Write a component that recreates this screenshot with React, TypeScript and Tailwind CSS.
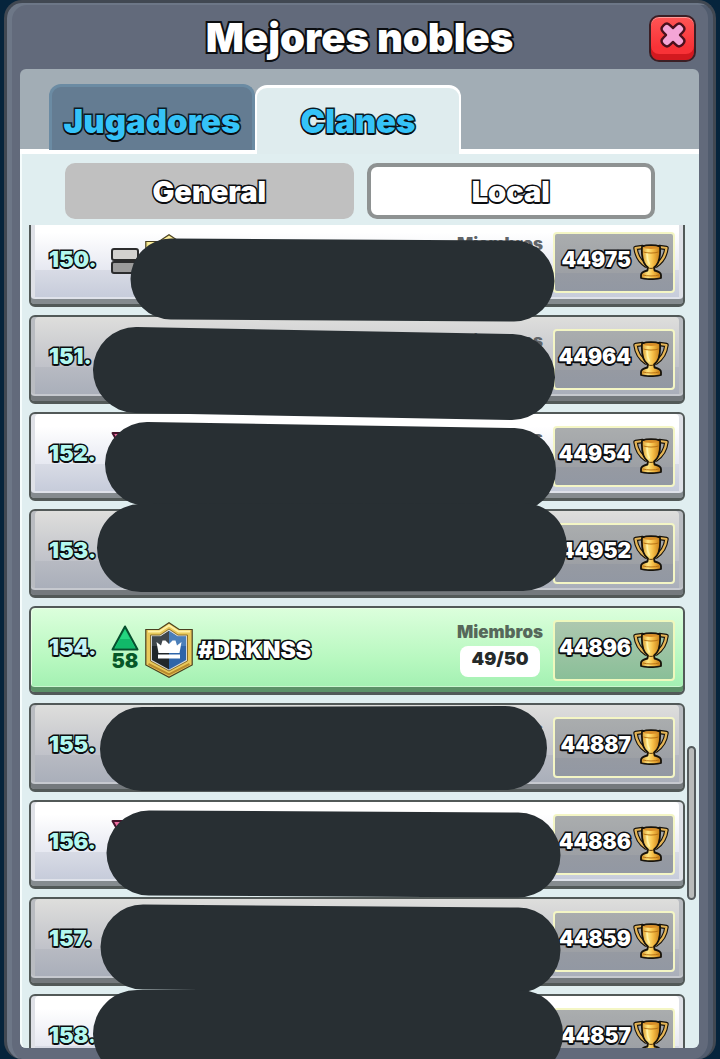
import { useState } from "react";
import clsx from "clsx";

type Trend = "up" | "down" | "same";
type Tone = "light" | "dark" | "own";

type Clan = {
  rank: number;
  trophies: number;
  tone: Tone;
  trend?: Trend;
  change?: number;
  name?: string;
  members?: string;
  badge?: "gold" | "blue";
};

const CLANS: Clan[] = [
  { rank: 150, trophies: 44975, tone: "light", trend: "same", badge: "gold" },
  { rank: 151, trophies: 44964, tone: "dark" },
  { rank: 152, trophies: 44954, tone: "light", trend: "down" },
  { rank: 153, trophies: 44952, tone: "dark" },
  {
    rank: 154,
    trophies: 44896,
    tone: "own",
    trend: "up",
    change: 58,
    name: "#DRKNSS",
    members: "49/50",
    badge: "blue",
  },
  { rank: 155, trophies: 44887, tone: "dark" },
  { rank: 156, trophies: 44886, tone: "light", trend: "down" },
  { rank: 157, trophies: 44859, tone: "dark" },
  { rank: 158, trophies: 44857, tone: "light" },
];

// Marker strokes hiding the other clans: x1, y1, x2, y2, thickness.
const STROKES = [
  [171, 279, 514, 281, 81],
  [136, 370, 512, 377, 86],
  [147, 464, 514, 470, 84],
  [141, 548, 523, 547, 88],
  [142, 749, 505, 748, 84],
  [149, 853, 518, 855, 85],
  [143, 947, 518, 950, 85],
  [137, 1034, 519, 1034, 88],
];

const outline = "font-black [paint-order:stroke_fill] [text-shadow:0_2px_0_#0b0d10]";
const thinStroke = "[-webkit-text-stroke:3px_#0b0d10]";

const rowTone: Record<Tone, string> = {
  light:
    "bg-[linear-gradient(#ffffff_15%,#e6e8f1_60%,#d8dbe5_60%,#c2c8d8)] shadow-[inset_0_-5px_#858b8f,inset_0_-7px_#dfe2ea,inset_4px_0_#dfe1e7,inset_-4px_0_#dfe1e7]",
  dark: "bg-[linear-gradient(#dededc,#c0c2c9_60%,#b7bac2_60%,#a6acb8)] shadow-[inset_0_-5px_#74797d,inset_0_-7px_#c6c9cf,inset_4px_0_#b9bcc1,inset_-4px_0_#b9bcc1]",
  own: "bg-[linear-gradient(#dcffdc,#b8f8c0_60%,#a0efb0)] shadow-[inset_0_-5px_#5c9168,inset_0_-6px_#c9f7cf,inset_1px_1px_#e9ffe6]",
};

export default function App() {
  const [tab, setTab] = useState("Clanes");
  const [scope, setScope] = useState("Local");

  return (
    <div className="relative h-screen overflow-hidden bg-[#06243c] px-1 font-['Inter','Liberation_Sans',sans-serif]">
      <main className="flex h-full flex-col rounded-[18px] border-x-[3px] border-t-[3px] border-[#414852] bg-[#626a7b] pr-[14px] pb-[11px] pl-[13px] shadow-[inset_5px_2px_#6d7787,inset_-5px_0_#515c6e]">
        <header className="grid h-[66px] shrink-0 grid-cols-[50px_1fr_50px] items-center">
          <h1
            className={clsx(
              outline,
              "col-start-2 pt-1 text-center text-[40px] leading-[44px] text-white [-webkit-text-stroke:4px_#0b0d10]",
            )}
          >
            Mejores nobles
          </h1>
          <button
            aria-label="Cerrar"
            className="mt-1 flex h-[47px] w-[47px] items-center justify-center rounded-[10px] border-2 border-[#3b1f25] bg-[linear-gradient(#ff5555,#f83237_70%)] pb-[6px] shadow-[inset_0_-6px_#d3191f,inset_0_1px_#ff9c99]"
          >
            <CloseIcon />
          </button>
        </header>

        <section className="flex min-h-0 flex-1 flex-col rounded-[6px] bg-[#a2adb5]">
          <div
            role="tablist"
            className="flex h-[85px] shrink-0 items-end bg-[linear-gradient(transparent_80px,#ffffff_80px)] pl-[29px]"
          >
            {["Jugadores", "Clanes"].map((t) => (
              <button
                key={t}
                role="tab"
                aria-selected={tab === t}
                onClick={() => setTab(t)}
                className={clsx(
                  outline,
                  "w-[206px] rounded-t-[12px] pt-1 text-[33px] leading-[40px] text-[#35c3f8] [-webkit-text-stroke:3px_#0b1c26]",
                  tab === t
                    ? "h-[69px] border-x-2 border-t-[3px] border-white bg-[#dfecee] pb-1"
                    : "mb-1 h-[66px] border-x-[3px] border-t-[3px] border-[#6b8ba3] bg-[#647c92]",
                )}
              >
                {t}
              </button>
            ))}
          </div>

          <div className="relative flex min-h-0 flex-1 flex-col rounded-b-[6px] border-l-2 border-[#f5fcfc] bg-[#e0eef0]">
            <div className="flex gap-[13px] pt-[9px] pr-11 pb-[6px] pl-[43px]">
              {["General", "Local"].map((s) => (
                <button
                  key={s}
                  aria-pressed={scope === s}
                  onClick={() => setScope(s)}
                  className={clsx(
                    outline,
                    thinStroke,
                    "h-14 flex-1 rounded-[10px] border-4 pt-[2px] text-[29px] leading-[32px] text-white",
                    scope === s ? "border-[#8e9292] bg-white" : "border-[#c0c0c0] bg-[#c0c0c0]",
                  )}
                >
                  {s}
                </button>
              ))}
            </div>

            <div className="min-h-0 flex-1 overflow-hidden pr-[14px] pl-[7px]">
              <ol className="-mt-[7px] flex flex-col gap-2">
                {CLANS.map((c) => (
                  <ClanRow key={c.rank} clan={c} />
                ))}
              </ol>
            </div>
            <div className="absolute right-[3px] bottom-[148px] h-[154px] w-[9px] rounded-full border-2 border-[#555b5d] bg-[#b9bbba]" />
          </div>
        </section>
      </main>

      <svg
        viewBox="0 0 720 1059"
        preserveAspectRatio="none"
        aria-hidden="true"
        className="pointer-events-none absolute inset-0 h-full w-full"
      >
        {STROKES.map(([x1, y1, x2, y2, w]) => (
          <line
            key={y1}
            x1={x1}
            y1={y1}
            x2={x2}
            y2={y2}
            stroke="#282f33"
            strokeWidth={w}
            strokeLinecap="round"
          />
        ))}
      </svg>
    </div>
  );
}

function ClanRow({ clan }: { clan: Clan }) {
  const own = clan.tone === "own";
  return (
    <li
      className={clsx(
        "flex h-[89px] shrink-0 items-center rounded-[6px] border-2 border-b-[3px] border-[#525958] pr-2 pl-[18px]",
        rowTone[clan.tone],
      )}
    >
      <span
        className={clsx(
          outline,
          thinStroke,
          "w-[60px] pb-[6px] text-[22px] leading-[28px]",
          own ? "text-[#c4f3f6]" : "text-[#b4f8ef]",
        )}
      >
        {clan.rank}.
      </span>

      <div className="flex h-[50px] w-[32px] flex-col items-center">
        {clan.trend && <TrendIcon trend={clan.trend} />}
        {clan.change && (
          <span className="text-[20px] leading-[20px] font-black text-[#075727]">{clan.change}</span>
        )}
      </div>
      <div className="ml-1 w-[50px]">{clan.badge && <Badge kind={clan.badge} />}</div>
      <span className={clsx(outline, thinStroke, "ml-[3px] flex-1 text-[23px] leading-[28px] text-white")}>
        {clan.name}
      </span>

      <div className="flex h-[59px] w-[88px] flex-col items-center">
        <span
          className={clsx(
            "text-[17px] leading-[22px] font-black",
            own ? "text-[#56685a]" : "text-[#606468]",
          )}
        >
          Miembros
        </span>
        {clan.members && (
          <span className="mt-[3px] h-[31px] w-20 rounded-[8px] bg-white text-center text-[18px] leading-[26px] font-black text-[#252a2a]">
            {clan.members}
          </span>
        )}
      </div>

      <div
        className={clsx(
          "ml-[9px] flex h-[61px] w-[122px] items-center justify-end rounded-[4px] border-2 pr-1",
          own
            ? "border-[#eef8bd] bg-[linear-gradient(#adc8af,#8abf98)]"
            : "border-[#f4f6c5] bg-[linear-gradient(#aaadae,#9da0a5_68%,#969aa2_68%,#9298a3)]",
        )}
      >
        <span className={clsx(outline, thinStroke, "pb-[5px] text-[21px] leading-[28px] text-white")}>
          {clan.trophies}
        </span>
        <TrophyIcon />
      </div>
    </li>
  );
}

function TrendIcon({ trend }: { trend: Trend }) {
  if (trend === "same") {
    return (
      <svg viewBox="0 0 28 27" className="mt-[11px] h-[27px] w-[28px] shrink-0">
        <rect x="1" y="1" width="26" height="11" rx="2" fill="#d2d1cf" stroke="#2b2c2d" strokeWidth="2" />
        <rect x="1" y="14" width="26" height="11" rx="2" fill="#9b9b9b" stroke="#2b2c2d" strokeWidth="2" />
      </svg>
    );
  }
  if (trend === "down") {
    return (
      <svg viewBox="0 0 28 26" className="h-[26px] w-[28px] shrink-0">
        <path d="M1.5 2h25L14 24z" fill="#ee6da0" stroke="#47142b" strokeWidth="2" strokeLinejoin="round" />
      </svg>
    );
  }
  return (
    <svg viewBox="0 0 28 26" className="h-[26px] w-[28px] shrink-0">
      <path d="M14 1.5 26.5 24.5h-25z" fill="#16c873" stroke="#07502e" strokeWidth="2" strokeLinejoin="round" />
      <path d="M14 5 24 23H4z" fill="#25d580" />
      <path d="M9 14h10l5 9H4z" fill="#11b969" />
    </svg>
  );
}

function Badge({ kind }: { kind: "gold" | "blue" }) {
  return (
    <svg viewBox="0 0 48 56" className="h-[56px] w-[48px]">
      <path
        d="M.8 7.5h13L24 .8l10.200 6.700h13V43L24 55.200.8 43z"
        fill={kind === "gold" ? "#f1e489" : "#e9c95b"}
        stroke="#4a4020"
        strokeWidth="1.200"
      />
      <path d="M3 9.500h11.500L24 3.500l9.500 6H45" fill="none" stroke="#fff1a5" strokeWidth="2" />
      <path d="M3.500 42 24 52.500 44.500 42" fill="none" stroke="#b98a2d" strokeWidth="2" />
      <path d="M5.500 13H15l9-6 9 6h9.500v26L24 49 5.500 39z" fill="#d5d8d8" stroke="#8e7127" />
      <path d="M7 14.500h8.500L24 9v38.500L7 38z" fill="#20262b" />
      <path d="M24 9l8.500 5.500H41V38l-17 9.500z" fill="#2f65a9" />
      <path d="M7 14.500h8.500L24 9v15H7z" fill="#3f464c" />
      <path d="M24 9l8.500 5.500H41V24H24z" fill="#4b7fb9" />
      <path d="M11.500 20l4.500 3.500 1.500-5h3l3.500 3.500 3.500-3.500h3l1.500 5 4.500-3.500L34.500 31h-21zM13 32.500h22V36.500H13z" fill="#fff" />
    </svg>
  );
}

function TrophyIcon() {
  return (
    <svg viewBox="0 0 36 36" className="ml-[2px] h-[36px] w-[36px] shrink-0">
      <defs>
        <linearGradient id="cup" x1="0" x2="1">
          <stop offset="0" stopColor="#d08a20" />
          <stop offset=".35" stopColor="#ffe680" />
          <stop offset=".6" stopColor="#f6bd45" />
          <stop offset="1" stopColor="#bd7413" />
        </linearGradient>
      </defs>
      <g fill="none" strokeLinecap="round" strokeLinejoin="round">
        <path d="M9.500 3 2.500 4C3.500 12 7.500 18 13 21.500M26.500 3l7 1C32.500 12 28.500 18 23 21.500" stroke="#17130b" strokeWidth="4.500" />
        <path d="M9.500 3 2.500 4C3.500 12 7.500 18 13 21.500M26.500 3l7 1C32.500 12 28.500 18 23 21.500" stroke="#e5b556" strokeWidth="2.200" />
      </g>
      <path
        d="M9 2.500C14 .8 22 .8 27 2.500c.6 9-.8 17.500-6 21l.6 3c3.500.8 6.400 2.500 6.400 4.500v3c-4 1.500-16 1.500-20 0v-3c0-2 2.900-3.700 6.400-4.500l.6-3C9.800 20 8.400 11.500 9 2.500z"
        fill="url(#cup)"
        stroke="#17130b"
        strokeWidth="1.800"
        strokeLinejoin="round"
      />
      <ellipse cx="18" cy="3.500" rx="7.500" ry="1.500" fill="#d98e28" />
      <path d="M10.500 8c4 1.400 11 1.400 15 0M10 31c4 1.300 12 1.300 16 0" fill="none" stroke="#b87316" />
      <path d="M14.800 23.800c2 .8 4.400.8 6.400 0" fill="none" stroke="#5a3607" />
      <path d="M14 10c0 4 .6 7 2.300 10" fill="none" stroke="#fff2a8" strokeWidth="1.600" strokeLinecap="round" />
    </svg>
  );
}

function CloseIcon() {
  return (
    <svg viewBox="0 0 26 26" className="h-[26px] w-[26px]">
      <path
        d="M7 1.500c2 0 3.500 2.500 6 4.500 2.500-2 4-4.500 6-4.500s5.500 3 5.500 5.500-2.500 3.500-4.500 6c2 2.500 4.500 3.500 4.500 6s-3.500 5.500-5.500 5.500-3.500-2.500-6-4.500c-2.500 2-4 4.500-6 4.500S1.500 21.500 1.500 19s2.500-3.500 4.500-6c-2-2.500-4.500-3.500-4.500-6S5 1.500 7 1.500z"
        fill="#f4a5d6"
        stroke="#4a101c"
        strokeWidth="2.400"
        strokeLinejoin="round"
      />
    </svg>
  );
}
